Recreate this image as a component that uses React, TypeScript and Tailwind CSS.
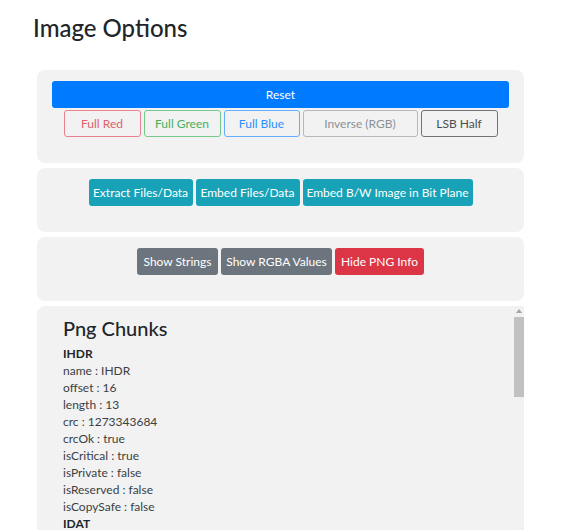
const outline = [
  { label: 'Full Red', cls: 'w-[77px] border-[#e8838d] text-[#e0606d]' },
  { label: 'Full Green', cls: 'w-[77px] border-[#76c98a] text-[#46b05e]' },
  { label: 'Full Blue', cls: 'w-[76px] border-[#66adff] text-[#2b8eff]' },
  { label: 'Inverse (RGB)', cls: 'w-[115px] border-[#b5b9bd] text-[#8a9197]' },
  { label: 'LSB Half', cls: 'w-[77px] border-[#6f7478] text-[#4a4f54]' },
]

type Chunk = {
  name: string
  offset: number
  length: number
  crc: number
  critical: boolean
}

const chunks: Chunk[] = [
  { name: 'IHDR', offset: 16, length: 13, crc: 1273343684, critical: true },
  { name: 'IDAT', offset: 41, length: 8192, crc: 2846017357, critical: true },
  { name: 'IEND', offset: 8245, length: 0, crc: 2923585666, critical: true },
]

function Card({ children }: { children: React.ReactNode }) {
  return (
    <div className="rounded-lg bg-[#f2f2f2] px-[15px] pt-[11px] pb-[26px]">
      {children}
    </div>
  )
}

export default function App() {
  return (
    <div
      className="h-[531px] overflow-hidden bg-white text-[#212529]"
      style={{ fontFamily: 'Lato, "Noto Sans", sans-serif' }}
    >
      <h1 className="ml-[33px] pt-[14px] text-[24px] leading-[1.2] font-medium">
        Image Options
      </h1>

      <div className="mt-[27px] ml-[37px] flex w-[487px] flex-col gap-[5px]">
        {/* Colour channel options */}
        <Card>
          <button className="h-[27px] w-full rounded-[3px] bg-[#007bff] text-[12px] text-white">
            Reset
          </button>
          <div className="mt-[2px] flex justify-center gap-[3px]">
            {outline.map((b) => (
              <button
                key={b.label}
                className={`h-[27px] rounded-[3px] border bg-transparent text-[12px] ${b.cls}`}
              >
                {b.label}
              </button>
            ))}
          </div>
        </Card>

        {/* Steganography */}
        <Card>
          <div className="flex justify-center gap-[3px]">
            <button className="h-[27px] w-[104px] rounded-[3px] bg-[#17a2b8] text-[12px] text-white">
              Extract Files/Data
            </button>
            <button className="h-[27px] w-[104px] rounded-[3px] bg-[#17a2b8] text-[12px] text-white">
              Embed Files/Data
            </button>
            <button className="h-[27px] w-[170px] rounded-[3px] bg-[#17a2b8] text-[12px] whitespace-nowrap text-white">
              Embed B/W Image in Bit Plane
            </button>
          </div>
        </Card>

        {/* Info toggles */}
        <Card>
          <div className="flex justify-center gap-[3px]">
            <button className="h-[27px] w-[81px] rounded-[3px] bg-[#6c757d] text-[12px] text-white">
              Show Strings
            </button>
            <button className="h-[27px] w-[111px] rounded-[3px] bg-[#6c757d] text-[12px] text-white">
              Show RGBA Values
            </button>
            <button className="h-[27px] w-[89px] rounded-[3px] bg-[#dc3545] text-[12px] text-white">
              Hide PNG Info
            </button>
          </div>
        </Card>

        {/* PNG chunks */}
        <div className="relative h-[224px] overflow-hidden rounded-tl-lg bg-[#f2f2f2] pt-[10px] pl-[26px]">
          <h3 className="text-[20px] leading-[1.2] font-medium">Png Chunks</h3>
          <div className="mt-[5px] text-[12px] leading-[17px] text-[#3a3f44]">
            {chunks.map((c, i) => (
              <div key={i}>
                <div className="font-bold text-[#212529]">{c.name}</div>
                <div>name : {c.name}</div>
                <div>offset : {c.offset}</div>
                <div>length : {c.length}</div>
                <div>crc : {c.crc}</div>
                <div>crcOk : true</div>
                <div>isCritical : {String(c.critical)}</div>
                <div>isPrivate : false</div>
                <div>isReserved : false</div>
                <div>isCopySafe : false</div>
              </div>
            ))}
          </div>

          {/* scrollbar */}
          <div className="absolute top-0 right-0 bottom-0 w-[10px] bg-[#f1f1f1]">
            <svg className="mx-auto mt-[3px] block" width="6" height="4" viewBox="0 0 6 4">
              <path d="M3 0L6 4H0z" fill="#a3a3a3" />
            </svg>
            <div className="mt-[4px] h-[80px] w-full bg-[#c1c1c1]" />
          </div>
        </div>
      </div>
    </div>
  )
}
